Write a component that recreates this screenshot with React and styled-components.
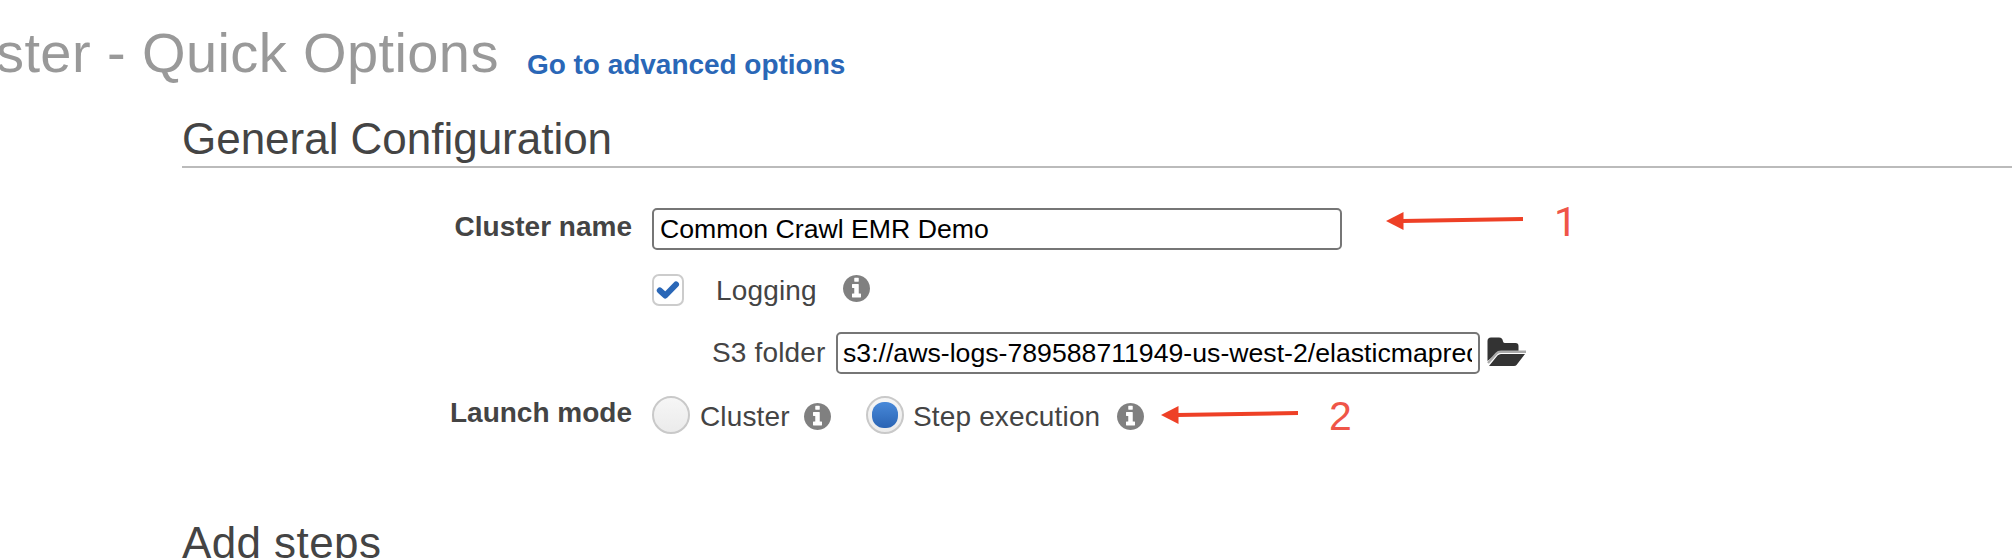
import React from 'react';
import styled, { createGlobalStyle } from 'styled-components';

const GlobalStyle = createGlobalStyle`
  * { box-sizing: border-box; }
  body { margin: 0; background: #fff; }
`;

const Page = styled.main`
  position: relative;
  height: 558px;
  overflow: hidden;
  background: #fff;
  color: #444;
  font-family: "Liberation Sans", Arial, sans-serif;
  font-size: 28px;
`;

const Header = styled.header`
  display: flex;
  align-items: flex-start;
  height: 116px;
  margin-left: -4px;
`;

const Title = styled.h1`
  flex: none;
  width: 504px;
  margin: 0;
  padding-top: 21px;
  color: #999;
  font-size: 56px;
  font-weight: 400;
  line-height: 64px;
  letter-spacing: 0.4px;
  white-space: nowrap;
`;

const AdvancedLink = styled.a`
  margin-left: 27px;
  padding-top: 49px;
  color: #2a67b7;
  font-weight: 700;
  line-height: 32px;
  letter-spacing: -0.03px;
  white-space: nowrap;
  text-decoration: none;
`;

const Section = styled.section`
  padding-left: 182px;
`;

const SectionTitle = styled.h2`
  height: 52px;
  margin: 0;
  padding-top: 1px;
  border-bottom: 2px solid #bbb;
  font-size: 44px;
  font-weight: 400;
  line-height: 44px;
  letter-spacing: ${(p) => p.$tracking || 0}px;
  white-space: nowrap;
`;

const Form = styled.div`
  height: 352px;
  padding-top: 40px;
`;

const Row = styled.div`
  display: grid;
  grid-template-columns: 450px 1fr;
  column-gap: 20px;
  height: ${(p) => p.$height}px;
`;

const FieldLabel = styled.div`
  padding-top: ${(p) => p.$top || 0}px;
  font-weight: 700;
  line-height: 32px;
  text-align: right;
  white-space: nowrap;
`;

const Controls = styled.div`
  display: flex;
  align-items: flex-start;
  padding-left: ${(p) => p.$indent || 0}px;
`;

const TextInput = styled.input`
  flex: none;
  width: ${(p) => p.$width}px;
  height: 42px;
  margin: 0;
  padding: 0 6px 0 ${(p) => p.$inset || 6}px;
  border: 2px solid #767676;
  border-radius: 5px;
  outline: none;
  background: #fff;
  color: #000;
  font-family: inherit;
  font-size: 26.67px;
`;

const Text = styled.span`
  flex: none;
  width: ${(p) => p.$width}px;
  margin-top: ${(p) => p.$top}px;
  line-height: 32px;
  letter-spacing: 0.15px;
  white-space: nowrap;
`;

const Checkbox = styled.span`
  display: grid;
  place-items: center;
  flex: none;
  width: 32px;
  height: 32px;
  margin-right: 32px;
  border: 2px solid #ccc;
  border-radius: 7px;
`;

const Radio = styled.span`
  display: grid;
  place-items: center;
  flex: none;
  width: 38px;
  height: 38px;
  margin: 0 ${(p) => p.$gap}px 0 ${(p) => p.$before || 0}px;
  border: 2px solid #c9c9c9;
  border-radius: 50%;
  background: linear-gradient(#f6f6f6, #ebebeb);
`;

const RadioDot = styled.span`
  width: 26px;
  height: 26px;
  border-radius: 12px;
  background: linear-gradient(#4889d9, #2a64b4);
`;

const InfoSvg = styled.svg`
  flex: none;
  width: 27px;
  height: 27px;
  margin-top: ${(p) => p.$top}px;
  fill: #808080;
`;

const FolderSvg = styled.svg`
  flex: none;
  width: 40px;
  height: 30px;
  margin: 5px 0 0 7px;
`;

const Callout = styled.div`
  position: absolute;
  left: ${(p) => p.$x}px;
  top: ${(p) => p.$y}px;
  display: flex;
  align-items: flex-start;
  gap: 30px;
  color: #ef5548;
`;

const ArrowSvg = styled.svg`
  width: 138px;
  height: 20px;
  margin-top: 9px;
`;

const StepNumber = styled.span`
  margin-top: 1px;
  font-family: ${(p) => (p.$narrow ? 'Roboto, ' : '')}"Liberation Sans", sans-serif;
  font-size: 41px;
  line-height: 40px;
`;

const Info = ({ top }) => (
  <InfoSvg $top={top} viewBox="0 128 1536 1536">
    <path d="M1024 1376v-160q0-14-9-23t-23-9h-96v-512q0-14-9-23t-23-9h-320q-14 0-23 9t-9 23v160q0 14 9 23t23 9h96v320h-96q-14 0-23 9t-9 23v160q0 14 9 23t23 9h448q14 0 23-9t9-23zm-128-896v-160q0-14-9-23t-23-9h-192q-14 0-23 9t-9 23v160q0 14 9 23t23 9h192q14 0 23-9t9-23zm640 416q0 209-103 385.5t-279.5 279.5-385.5 103-385.5-103-279.5-279.5-103-385.5 103-385.5 279.5-279.5 385.5-103 385.5 103 279.5 279.5 103 385.5z" />
  </InfoSvg>
);

const Folder = () => (
  <FolderSvg viewBox="0 0 40 30">
    <path d="M0.500 24V4Q0.500 0.500 4 0.500H12Q15.500 0.500 16 4.500Q16.500 6 18 6H28.500Q31.500 6 31.500 9V14H13Z" fill="#333" />
    <path d="M1 26L9.500 16.500Q11 14.800 14 14.800H39" fill="none" stroke="#aaa" strokeWidth="2.400" />
    <path d="M2 29L10.500 18.500Q12 17 14 17H38L29.500 28Q28.800 29 27 29H2Z" fill="#333" />
  </FolderSvg>
);

const Step = ({ x, y, narrow, children }) => (
  <Callout $x={x} $y={y}>
    <ArrowSvg viewBox="0 0 138 20">
      <path d="M16 11L137 9" stroke="#ee4026" strokeWidth="4" />
      <path d="M0 11L17.500 2V20Z" fill="#ee4026" />
    </ArrowSvg>
    <StepNumber $narrow={narrow}>{children}</StepNumber>
  </Callout>
);

export default function App() {
  return (
    <Page>
      <GlobalStyle />
      <Header>
        <Title>ster - Quick Options</Title>
        <AdvancedLink>Go to advanced options</AdvancedLink>
      </Header>
      <Section>
        <SectionTitle $tracking={-0.02}>General Configuration</SectionTitle>
        <Form>
          <Row $height={66}>
            <FieldLabel $top={3}>Cluster name</FieldLabel>
            <Controls>
              <TextInput $width={690} defaultValue="Common Crawl EMR Demo" />
            </Controls>
          </Row>
          <Row $height={58}>
            <span />
            <Controls>
              <Checkbox>
                <svg width="24" height="20" viewBox="0 0 24 20">
                  <path d="M3.800 10.500L9.300 15.500L20 4.500" fill="none" stroke="#2a67b7" strokeWidth="6" strokeLinecap="round" strokeLinejoin="round" />
                </svg>
              </Checkbox>
              <Text $width={126.5} $top={1}>Logging</Text>
              <Info top={0.5} />
            </Controls>
          </Row>
          <Row $height={64}>
            <span />
            <Controls $indent={60}>
              <Text $width={124} $top={5}>S3 folder</Text>
              <TextInput $width={644} $inset={5} defaultValue="s3://aws-logs-789588711949-us-west-2/elasticmapreduce/" />
              <Folder />
            </Controls>
          </Row>
          <Row $height={60}>
            <FieldLabel $top={1}>Launch mode</FieldLabel>
            <Controls>
              <Radio $gap={10} />
              <Text $width={104} $top={5}>Cluster</Text>
              <Info top={6.5} />
              <Radio $before={35} $gap={9} ><RadioDot /></Radio>
              <Text $width={204} $top={5}>Step execution</Text>
              <Info top={6.5} />
            </Controls>
          </Row>
        </Form>
      </Section>
      <Section>
        <SectionTitle $tracking={0.4}>Add steps</SectionTitle>
      </Section>
      <Step x={1386} y={201} narrow>1</Step>
      <Step x={1161} y={395}>2</Step>
    </Page>
  );
}
